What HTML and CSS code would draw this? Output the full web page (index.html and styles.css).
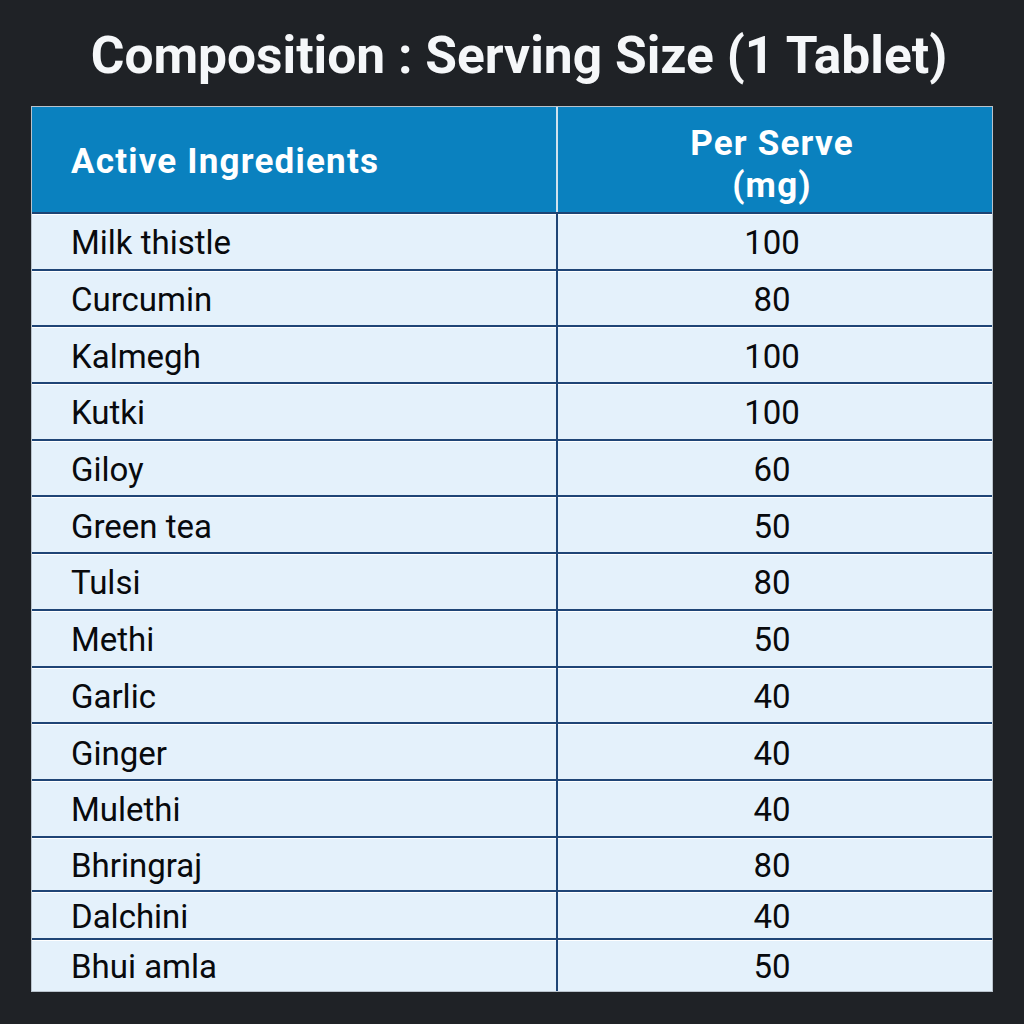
FILE: index.html
```html
<!DOCTYPE html>
<html lang="en">
<head>
<meta charset="utf-8">
<title>Composition</title>
<link rel="stylesheet" href="styles.css">
</head>
<body>
<div class="page">
  <h1 class="title">Composition : Serving Size (1 Tablet)</h1>
  <table class="comp">
    <thead>
      <tr>
        <th class="col-name">Active Ingredients</th>
        <th class="col-val">Per Serve<br>(mg)</th>
      </tr>
    </thead>
    <tbody>
      <tr><td class="name">Milk thistle</td><td class="val">100</td></tr>
      <tr><td class="name">Curcumin</td><td class="val">80</td></tr>
      <tr><td class="name">Kalmegh</td><td class="val">100</td></tr>
      <tr><td class="name">Kutki</td><td class="val">100</td></tr>
      <tr><td class="name">Giloy</td><td class="val">60</td></tr>
      <tr><td class="name">Green tea</td><td class="val">50</td></tr>
      <tr><td class="name">Tulsi</td><td class="val">80</td></tr>
      <tr><td class="name">Methi</td><td class="val">50</td></tr>
      <tr><td class="name">Garlic</td><td class="val">40</td></tr>
      <tr><td class="name">Ginger</td><td class="val">40</td></tr>
      <tr><td class="name">Mulethi</td><td class="val">40</td></tr>
      <tr class="row-a"><td class="name">Bhringraj</td><td class="val">80</td></tr>
      <tr class="row-b"><td class="name">Dalchini</td><td class="val">40</td></tr>
      <tr class="row-c"><td class="name">Bhui amla</td><td class="val">50</td></tr>
    </tbody>
  </table>
</div>
</body>
</html>
```
FILE: styles.css
```css
html, body {
  margin: 0;
  padding: 0;
  background: #1f2226;
}
.page {
  width: 1024px;
  height: 1024px;
  box-sizing: border-box;
  padding: 0 32px;
  font-family: Roboto, "Liberation Sans", sans-serif;
}
.title {
  margin: 0;
  height: 107px;
  display: flex;
  align-items: center;
  justify-content: center;
  padding-left: 14px;
  padding-top: 4px;
  box-sizing: border-box;
  color: #f5f7f9;
  font-size: 51.5px;
  font-weight: 700;
}
.comp {
  width: 960px;
  border-collapse: collapse;
  table-layout: fixed;
  background: #e4f1fb;
  outline: 1px solid #b9c3cc;
}
.comp th {
  background: #0a81bf;
  color: #ffffff;
  font-weight: 700;
  padding: 0;
  border-bottom: 2px solid #1d4474;
  font-size: 35px;
  letter-spacing: 1.2px;
}
.col-name {
  width: 485px;
  height: 101px;
  text-align: left;
  padding: 4px 0 0 39px !important;
  border-right: 2px solid #cfe2ee;
}
.col-val {
  height: 95px;
  text-align: center;
  line-height: 42px;
  padding: 10px 6px 0 0 !important;
}
.comp td {
  height: 51.7px;
  padding: 3px 0 0 0;
  color: #080a0d;
  font-size: 33px;
  border-bottom: 2px solid #1f4576;
  box-shadow: inset 0 1px 0 #ffffff;
}
.comp tr:last-child td {
  border-bottom: none;
}
.name {
  padding-left: 39px !important;
  border-right: 2px solid #1f4576;
}
.val {
  text-align: center;
  padding-right: 6px !important;
}
.row-a td { height: 49px; }
.row-b td { height: 43px; }
.row-c td { height: 48px; }
```
